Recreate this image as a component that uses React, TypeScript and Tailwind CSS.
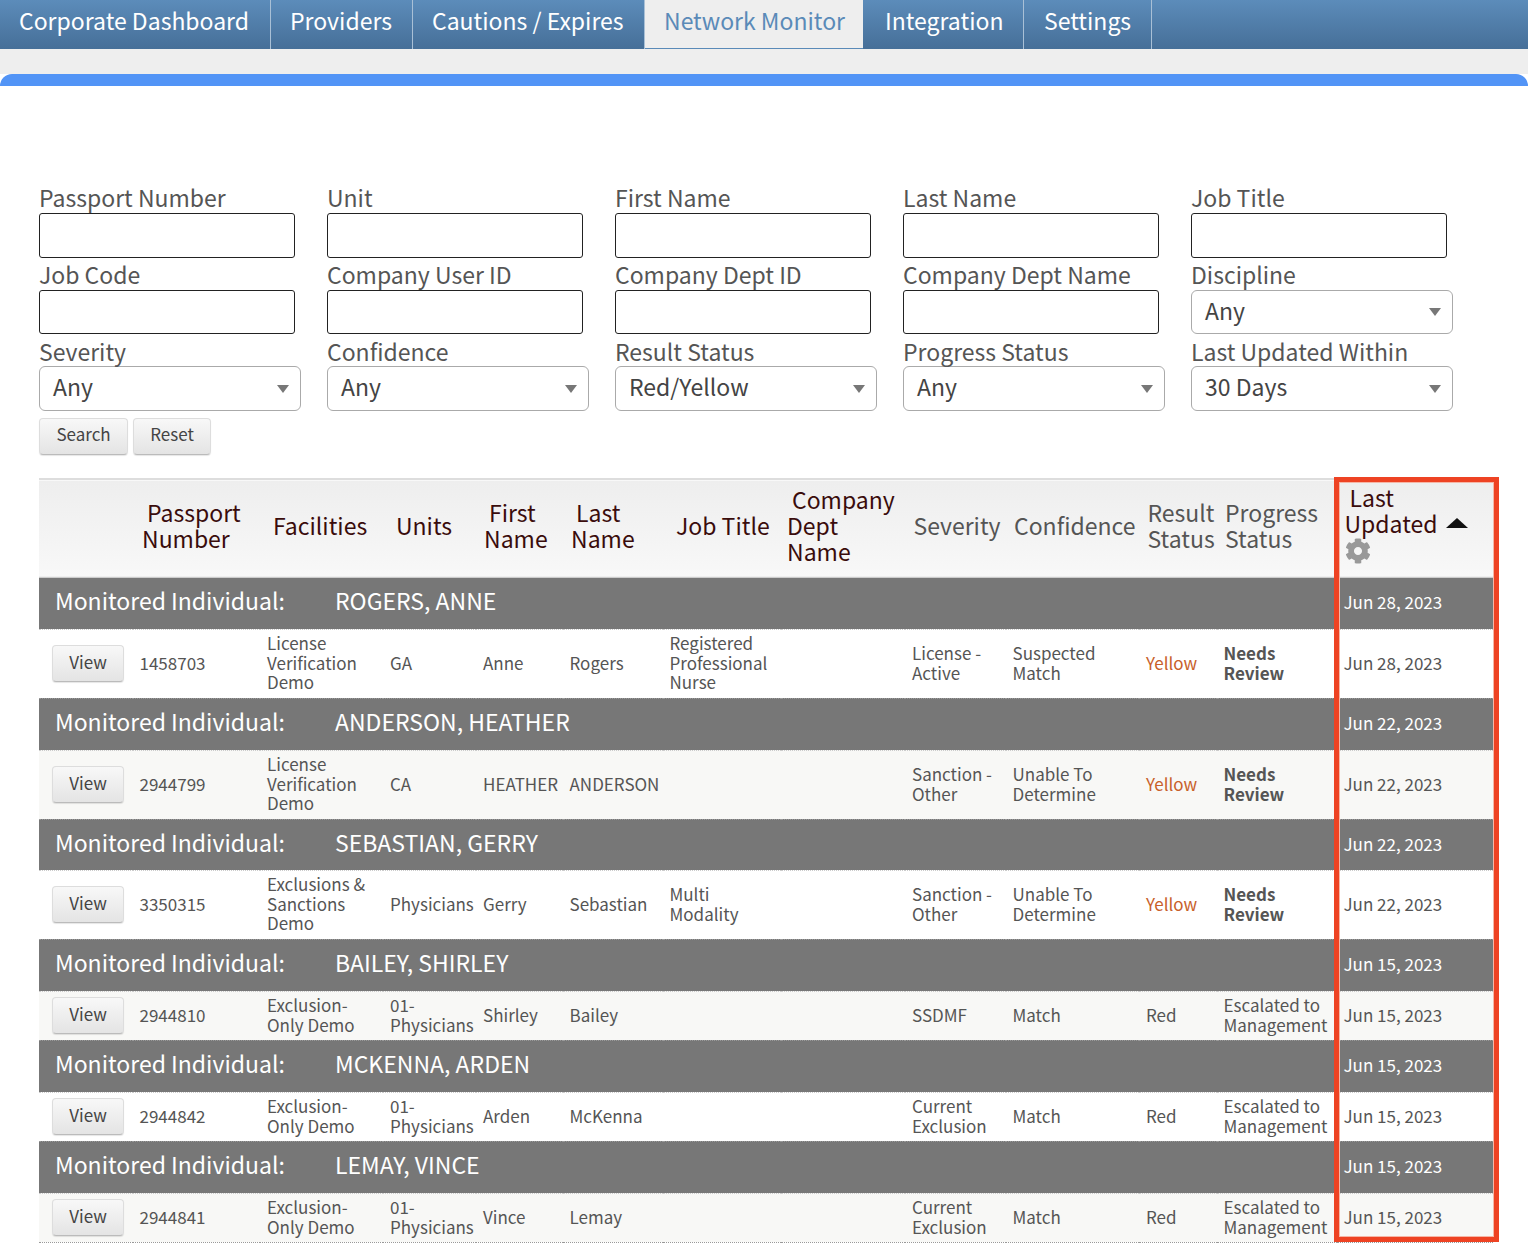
import React from "react";
import { FaCog } from "react-icons/fa";

const font = { fontFamily: '"Noto Sans CJK SC", "Noto Sans", sans-serif' };

const tabs = [
  ["Corporate Dashboard", "w-[271px] pl-[19px]", false],
  ["Providers", "w-[142px] pl-[19px]", false],
  ["Cautions / Expires", "w-[232px] pl-[19px]", false],
  ["Network Monitor", "w-[218px] pl-[19px]", true],
  ["Integration", "w-[161px] pl-[22px]", false],
  ["Settings", "w-[128px] pl-[20px]", false],
] as const;

function Caret() {
  return (
    <svg width="12" height="8" viewBox="0 0 12 8" className="shrink-0">
      <polygon points="0,0 12,0 6,8" fill="#777" />
    </svg>
  );
}

function TextField({ label, h }: { label: string; h: string }) {
  return (
    <div className="w-[288px] shrink-0">
      <div className="h-[25px] text-[23px] leading-[24px] text-[#555] whitespace-nowrap">{label}</div>
      <input className={`block mt-[3px] w-[256px] ${h} border border-[#222] rounded-[3px] bg-white`} />
    </div>
  );
}

function SelectField({ label, value, h, gap, lift }: { label: string; value: string; h: string; gap: string; lift: string }) {
  return (
    <div className="w-[288px] shrink-0">
      <div className="h-[25px] text-[23px] leading-[24px] text-[#555] whitespace-nowrap">{label}</div>
      <div className={`${gap} flex items-center justify-between w-[262px] ${h} border border-[#aaa] rounded-[6px] bg-white pl-[13px] pr-[11px] text-[23px] text-[#444]`}>
        <span className={lift}>{value}</span>
        <Caret />
      </div>
    </div>
  );
}

type Row = {
  name: string;
  date: string;
  id: string;
  fac: string[];
  unit: string[];
  first: string;
  last: string;
  job: string[];
  sev: string[];
  conf: string[];
  res: string;
  prog: string[];
  h: string;
  gh: string;
  bg: string;
};

const rows: Row[] = [
  { name: "ROGERS, ANNE", date: "Jun 28, 2023", id: "1458703", fac: ["License", "Verification", "Demo"], unit: ["GA"], first: "Anne", last: "Rogers", job: ["Registered", "Professional", "Nurse"], sev: ["License -", "Active"], conf: ["Suspected", "Match"], res: "Yellow", prog: ["Needs", "Review"], h: "h-[69px]", gh: "h-[52px]", bg: "bg-white" },
  { name: "ANDERSON, HEATHER", date: "Jun 22, 2023", id: "2944799", fac: ["License", "Verification", "Demo"], unit: ["CA"], first: "HEATHER", last: "ANDERSON", job: [], sev: ["Sanction -", "Other"], conf: ["Unable To", "Determine"], res: "Yellow", prog: ["Needs", "Review"], h: "h-[69px]", gh: "h-[52px]", bg: "bg-[#f8f8f6]" },
  { name: "SEBASTIAN, GERRY", date: "Jun 22, 2023", id: "3350315", fac: ["Exclusions &", "Sanctions", "Demo"], unit: ["Physicians"], first: "Gerry", last: "Sebastian", job: ["Multi", "Modality"], sev: ["Sanction -", "Other"], conf: ["Unable To", "Determine"], res: "Yellow", prog: ["Needs", "Review"], h: "h-[69px]", gh: "h-[51px]", bg: "bg-white" },
  { name: "BAILEY, SHIRLEY", date: "Jun 15, 2023", id: "2944810", fac: ["Exclusion-", "Only Demo"], unit: ["01-", "Physicians"], first: "Shirley", last: "Bailey", job: [], sev: ["SSDMF"], conf: ["Match"], res: "Red", prog: ["Escalated to", "Management"], h: "h-[49px]", gh: "h-[52px]", bg: "bg-[#f8f8f6]" },
  { name: "MCKENNA, ARDEN", date: "Jun 15, 2023", id: "2944842", fac: ["Exclusion-", "Only Demo"], unit: ["01-", "Physicians"], first: "Arden", last: "McKenna", job: [], sev: ["Current", "Exclusion"], conf: ["Match"], res: "Red", prog: ["Escalated to", "Management"], h: "h-[49px]", gh: "h-[52px]", bg: "bg-white" },
  { name: "LEMAY, VINCE", date: "Jun 15, 2023", id: "2944841", fac: ["Exclusion-", "Only Demo"], unit: ["01-", "Physicians"], first: "Vince", last: "Lemay", job: [], sev: ["Current", "Exclusion"], conf: ["Match"], res: "Red", prog: ["Escalated to", "Management"], h: "h-[49px]", gh: "h-[52px]", bg: "bg-[#f8f8f6]" },
];

const widths = [94, 127, 123, 93, 87, 100, 118, 124, 101, 133, 78, 120, 156];

function Lines({ l }: { l: string[] }) {
  return (
    <div className="-mt-[2px] leading-[19.7px]">
      {l.map((t, i) => (
        <div key={i} className="whitespace-nowrap">{t}</div>
      ))}
    </div>
  );
}

const thBase = "text-left align-middle font-normal text-[23px] leading-[26px]";

export default function App() {
  return (
    <div style={font} className="relative w-[1528px] h-[1254px] bg-white overflow-hidden">
      <nav className="flex h-[49px] bg-gradient-to-b from-[#5c8cba] to-[#466f98]">
        {tabs.map(([t, w, active]) => (
          <div
            key={t}
            className={`${w} h-full shrink-0 flex items-center text-[23px] whitespace-nowrap ${
              active
                ? "bg-[#eeeeee] text-[#5a8ab8] border-b border-b-[#5a8ab8]"
                : "text-white border-r border-r-[#a9c0d6]"
            }`}
          >
            <span className="-mt-[8px]">{t}</span>
          </div>
        ))}
      </nav>
      <div className="h-[25px] bg-[#eeeeee]" />
      <div className="h-[12px] bg-[#5294f6] rounded-t-[12px]" />

      <main className="pl-[39px] pr-[35px]">
        <form className="pt-[99px]">
          <div className="flex">
            {["Passport Number", "Unit", "First Name", "Last Name", "Job Title"].map((l) => (
              <TextField key={l} label={l} h="h-[45px]" />
            ))}
          </div>
          <div className="flex mt-[4px]">
            {["Job Code", "Company User ID", "Company Dept ID", "Company Dept Name"].map((l) => (
              <TextField key={l} label={l} h="h-[44px]" />
            ))}
            <SelectField label="Discipline" value="Any" h="h-[44px]" gap="mt-[3px]" lift="-mt-[3px]" />
          </div>
          <div className="flex mt-[5px]">
            <SelectField label="Severity" value="Any" h="h-[45px]" gap="mt-[2px]" lift="-mt-[5px]" />
            <SelectField label="Confidence" value="Any" h="h-[45px]" gap="mt-[2px]" lift="-mt-[5px]" />
            <SelectField label="Result Status" value="Red/Yellow" h="h-[45px]" gap="mt-[2px]" lift="-mt-[5px]" />
            <SelectField label="Progress Status" value="Any" h="h-[45px]" gap="mt-[2px]" lift="-mt-[5px]" />
            <SelectField label="Last Updated Within" value="30 Days" h="h-[45px]" gap="mt-[2px]" lift="-mt-[5px]" />
          </div>
          <div className="flex gap-[5px] mt-[7px]">
            {[["Search", "w-[89px]"], ["Reset", "w-[78px]"]].map(([b, w]) => (
              <button
                key={b}
                type="button"
                className={`h-[37px] ${w} rounded-[4px] border border-[#ddd] border-b-[#bbb] bg-gradient-to-b from-[#f8f8f8] to-[#e4e4e4] text-[17px] leading-[30px] text-[#444] shadow-[0_1px_1px_rgba(0,0,0,0.1)]`}
              >
                <span className="relative -top-[3px]">{b}</span>
              </button>
            ))}
          </div>
        </form>

        <table className="mt-[23px] table-fixed border-collapse w-[1454px]">
          <colgroup>
            {widths.map((w, i) => (
              <col key={i} style={{ width: w }} />
            ))}
          </colgroup>
          <thead>
            <tr className="h-[98px] border-t-2 border-t-[#ddd] border-b border-b-[#ccc] bg-gradient-to-b from-[#eeeeee] to-[#f8f8f8]">
              <th className={thBase} />
              <th className={`${thBase} pb-[6px] pl-[9px] text-[#3a0c0c] indent-[5px]`}>Passport Number</th>
              <th className={`${thBase} pb-[6px] pl-[13px] text-[#3a0c0c]`}>Facilities</th>
              <th className={`${thBase} pb-[6px] pl-[13px] text-[#3a0c0c]`}>Units</th>
              <th className={`${thBase} pb-[6px] pl-[8px] text-[#3a0c0c] indent-[5px]`}>First Name</th>
              <th className={`${thBase} pb-[6px] pl-[8px] text-[#3a0c0c] indent-[5px]`}>Last Name</th>
              <th className={`${thBase} pb-[6px] pl-[13px] text-[#3a0c0c] whitespace-nowrap`}>Job Title</th>
              <th className={`${thBase} pb-[6px] pl-[6px] text-[#3a0c0c] indent-[5px]`}>Company Dept Name</th>
              <th className={`${thBase} pb-[6px] pl-[8.5px] text-[#555]`}>Severity</th>
              <th className={`${thBase} pb-[6px] pl-[8px] text-[#555]`}>Confidence</th>
              <th className={`${thBase} pb-[6px] pl-[8.5px] text-[#555]`}>Result Status</th>
              <th className={`${thBase} pb-[6px] pl-[8px] text-[#555]`}>Progress Status</th>
              <th className={`${thBase} pb-[8px] pl-[7.5px] text-[#3a0c0c] leading-[25px]`}>
                <div className="indent-[5px] whitespace-nowrap">Last</div>
                <div className="flex items-center gap-[8px]">
                  Updated
                  <svg width="22" height="10" viewBox="0 0 22 10" className="-mt-[1px]">
                    <polygon points="11,0 22,10 0,10" fill="#111" />
                  </svg>
                </div>
                <FaCog className="mt-[2px] text-[26px] text-[#999]" />
              </th>
            </tr>
          </thead>
          <tbody>
            {rows.map((r) => (
              <React.Fragment key={r.name}>
                <tr className={`${r.gh} bg-[#777777] text-white border-b border-dotted border-b-[#ccc]`}>
                  <td colSpan={12} className="pl-[16px] text-[23px] leading-[26px] whitespace-nowrap">
                    <div className="flex -mt-[6px]">
                      <span className="w-[280px]">Monitored Individual:</span>
                      <span>{r.name}</span>
                    </div>
                  </td>
                  <td className="pl-[6.5px] text-[17px] leading-[20px]"><div className="-mt-[2px]">{r.date}</div></td>
                </tr>
                <tr className={`${r.h} ${r.bg} text-[17px] leading-[20px] text-[#555] border-b border-dotted border-b-[#999]`}>
                  <td className="pl-[13px]">
                    <button
                      type="button"
                      className="w-[72px] h-[37px] rounded-[4px] border border-[#ddd] border-b-[#bbb] bg-gradient-to-b from-[#f8f8f8] to-[#e4e4e4] text-[#444] shadow-[0_1px_1px_rgba(0,0,0,0.1)]"
                    >
                      <span className="relative -top-[2px]">View</span>
                    </button>
                  </td>
                  <td className="pl-[6.5px]"><Lines l={[r.id]} /></td>
                  <td className="pl-[7px]"><Lines l={r.fac} /></td>
                  <td className="pl-[7px]"><Lines l={r.unit} /></td>
                  <td className="pl-[7px]"><Lines l={[r.first]} /></td>
                  <td className="pl-[6.5px]"><Lines l={[r.last]} /></td>
                  <td className="pl-[6.5px]"><Lines l={r.job} /></td>
                  <td />
                  <td className="pl-[7px]"><Lines l={r.sev} /></td>
                  <td className="pl-[6.5px]"><Lines l={r.conf} /></td>
                  <td className={`pl-[7px] ${r.res === "Yellow" ? "text-[#c8602a]" : ""}`}><Lines l={[r.res]} /></td>
                  <td className={`pl-[6.5px] ${r.prog[0] === "Needs" ? "font-bold" : ""}`}><Lines l={r.prog} /></td>
                  <td className="pl-[6.5px]"><Lines l={[r.date]} /></td>
                </tr>
              </React.Fragment>
            ))}
          </tbody>
        </table>
      </main>

      <div className="absolute left-[1334px] top-[477px] w-[165px] h-[765px] border-[5px] border-[#ee4323] shadow-[inset_0_0_0_1px_#f6b6a6] pointer-events-none" />
    </div>
  );
}
